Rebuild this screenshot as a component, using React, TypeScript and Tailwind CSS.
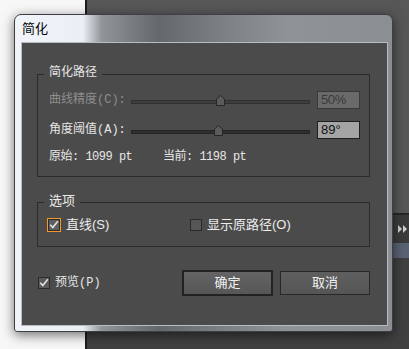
import React from "react";

const mono = "font-['Liberation_Mono','Noto_Sans_CJK_SC',monospace]";
const sans = "font-['Liberation_Sans','Noto_Sans_CJK_SC',sans-serif]";

function Thumb() {
    return (
        <svg width="9" height="11" viewBox="0 0 9 11" className="block">
            <path d="M0.5 4 L4.5 0.5 L8.5 4 L8.5 10.5 L0.5 10.5 Z" fill="#5b5b5b" stroke="#262626" />
        </svg>
    );
}

function Tick() {
    return (
        <svg width="10" height="10" viewBox="0 0 10 10" className="block">
            <path d="M1.2 4.8 L3.8 7.6 L8.8 1.2" fill="none" stroke="#e2e2e2" strokeWidth="1.6" />
        </svg>
    );
}

function Slider({ pos, disabled }: { pos: string; disabled?: boolean }) {
    return (
        <div className="relative h-[11px] flex-1">
            <div
                className={
                    disabled
                        ? "absolute inset-x-0 bottom-[2px] h-[4px] border border-[#303030] bg-[#3d3d3d]"
                        : "absolute inset-x-0 bottom-[2px] h-[4px] border border-[#242424] bg-[#2f2f2f]"
                }
            />
            <div className={`absolute top-0 ${pos}`}>
                <Thumb />
            </div>
        </div>
    );
}

function Group({ title, titleClass, children, className }: { title: string; titleClass: string; children: React.ReactNode; className: string }) {
    return (
        <div className={`relative mx-[15px] mr-[17px] border border-[#2b2b2b] ${className}`}>
            {/* legend sits on the top border */}
            <span className={`absolute left-[6px] px-[5px] bg-[#4b4b4b] ${titleClass}`}>{title}</span>
            {children}
        </div>
    );
}

export default function App() {
    return (
        <div className="relative flex h-[349px] w-[409px] overflow-hidden bg-[#565656]">
            {/* desktop behind the dialog */}
            <div className="w-[85px] bg-[#f7f7f7]" />
            <div className="w-[2px] bg-[#1d1d1d]" />
            <div className="flex flex-1 flex-col">
                <div className="h-[213px] bg-[#575757]" />
                <div className="h-[2px] bg-[#262626]" />
                <div className="flex h-[28px] items-center justify-end bg-[#3b3b3b] pr-[1px]">
                    <svg width="10" height="8" viewBox="0 0 10 8" className="block">
                        <path d="M0 0 L4 4 L0 8 Z M5 0 L9 4 L5 8 Z" fill="#cfcfcf" />
                    </svg>
                </div>
                <div className="h-[15px] bg-[#5a6172]" />
                <div className="flex-1 bg-[#404040]" />
            </div>

            {/* dialog window */}
            <div className="absolute left-[14px] top-[14px] flex h-[318px] w-[379px] flex-col rounded-t-[7px] rounded-b-[3px] border border-[#3d3f42] bg-[linear-gradient(90deg,#f1f5fa_0%,#eaeff5_18%,#919498_23%,#64676b_38%,#7c7f83_55%,#8f9296_72%,#8b8e92_100%)] pb-[5px] pl-[6px] pr-[4px] shadow-[0_3px_12px_rgba(0,0,0,0.55)]">
                <div className={`flex h-[27px] items-center pl-[1px] pt-[1px] text-[13px] text-black ${sans}`}>简化</div>

                <div className="flex flex-1 flex-col border border-[#b9bdc2] bg-[#4b4b4b]">
                    <Group
                        title="简化路径"
                        titleClass={`top-[-9px] text-[12px] leading-[14px] text-[#e6e6e6] ${mono}`}
                        className="mt-[31px] pb-[12px] pl-[11px] pr-[9px] pt-[16px]"
                    >
                        <div className="flex h-[18px] items-center">
                            <span className={`w-[82px] text-[12px] leading-[14px] text-[#8d8d8d] ${mono}`}>曲线精度(C):</span>
                            <Slider pos="left-[calc(50%-4.5px)]" disabled />
                            <div className="ml-[7px] flex h-[18px] w-[43px] items-center border border-[#3a3a3a] bg-[#6a6a6a] px-[3px] text-[13px] tracking-[-0.4px] text-[#3a3a3a] font-['Liberation_Sans',sans-serif]">
                                50%
                            </div>
                        </div>
                        <div className="mt-[12px] flex h-[18px] items-center">
                            <span className={`w-[82px] text-[12px] leading-[14px] text-[#e6e6e6] ${mono}`}>角度阈值(A):</span>
                            <Slider pos="left-[calc(49%-4.5px)]" />
                            <div className="ml-[7px] flex h-[18px] w-[43px] items-center border border-[#1f1f1f] bg-[#a4a4a4] px-[3px] text-[13px] text-[#111111] font-['Liberation_Sans',sans-serif]">
                                89°
                            </div>
                        </div>
                        <div className={`mt-[11px] flex h-[14px] items-center text-[12px] leading-[14px] tracking-[-0.5px] text-[#e6e6e6] ${mono}`}>
                            <span className="w-[114px]">原始: 1099 pt</span>
                            <span>当前: 1198 pt</span>
                        </div>
                    </Group>

                    <Group
                        title="选项"
                        titleClass={`top-[-10px] text-[13px] leading-[16px] text-[#ececec] ${sans}`}
                        className="mt-[25px] pb-[14px] pl-[10px] pt-[15px]"
                    >
                        <div className={`flex h-[14px] items-center text-[13px] text-[#ececec] ${sans}`}>
                            <div className="flex w-[142px] items-center">
                                <div className="flex h-[12px] w-[12px] items-center justify-center border border-[#2c2c2c] bg-[#5e5e5e] outline outline-1 outline-[#f2992e]">
                                    <Tick />
                                </div>
                                <span className="ml-[6px]">直线(S)</span>
                            </div>
                            <div className="h-[12px] w-[12px] border border-[#2a2a2a] bg-[#565656]" />
                            <span className="ml-[5px]">显示原路径(O)</span>
                        </div>
                    </Group>

                    <div className="mt-[23px] flex items-center pl-[16px] pr-[17px]">
                        <div className="flex h-[12px] w-[12px] items-center justify-center border border-[#2c2c2c] bg-[#5a5a5a]">
                            <Tick />
                        </div>
                        <span className={`ml-[5px] text-[12px] text-[#e6e6e6] ${mono}`}>预览(P)</span>
                        <div className="flex-1" />
                        <button className={`h-[26px] w-[91px] border-2 border-[#222222] bg-[linear-gradient(180deg,#646464,#565656)] text-[13px] text-[#f2f2f2] ${sans}`}>
                            确定
                        </button>
                        <button className={`ml-[7px] h-[24px] w-[90px] border border-[#282828] bg-[linear-gradient(180deg,#5f5f5f,#555555)] text-[13px] text-[#f2f2f2] ${sans}`}>
                            取消
                        </button>
                    </div>
                </div>
            </div>
        </div>
    );
}
